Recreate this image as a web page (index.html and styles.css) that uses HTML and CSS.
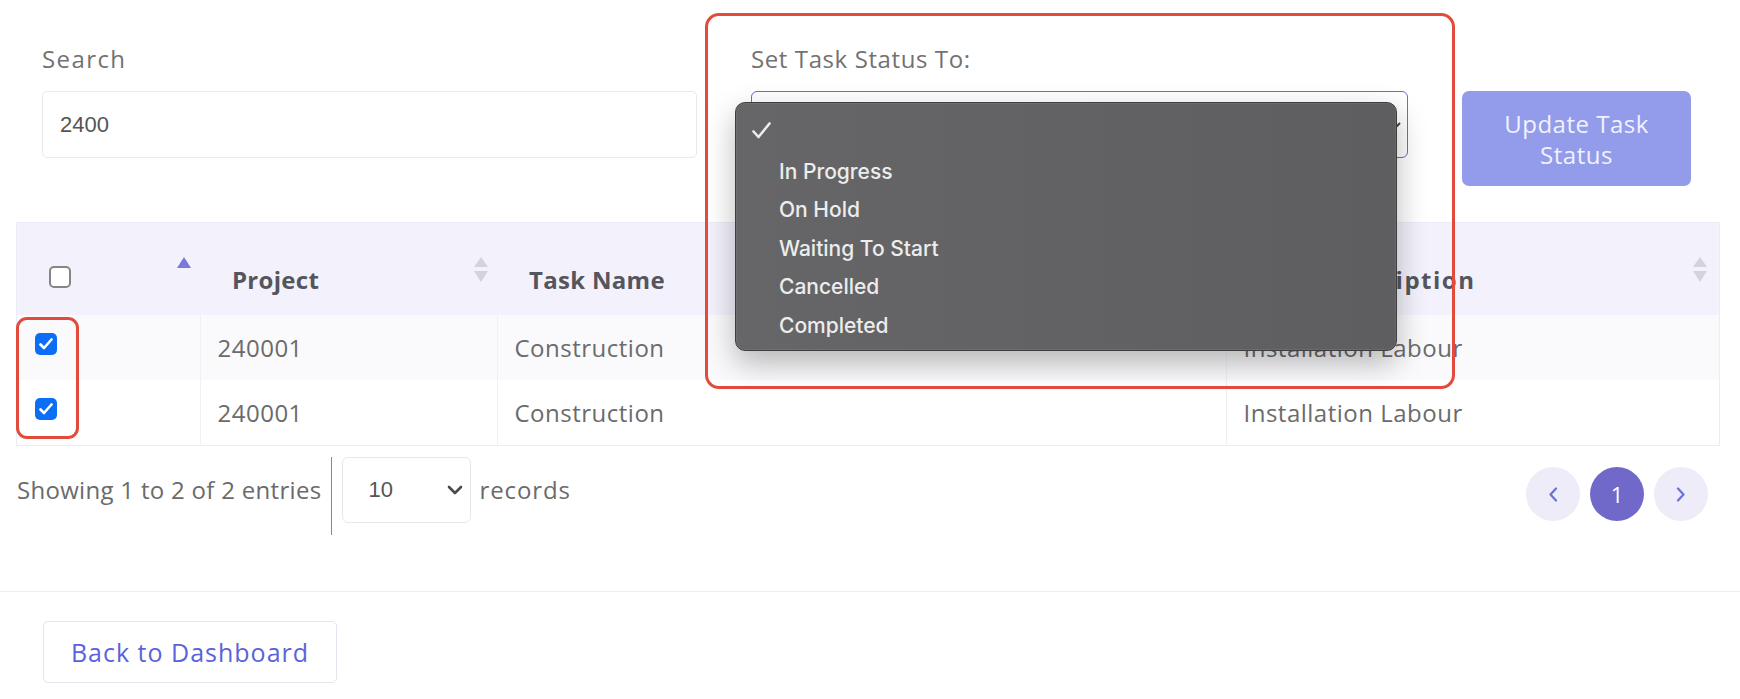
FILE: index.html
```html
<!DOCTYPE html>
<html lang="en">
<head>
<meta charset="utf-8">
<title>Update Task Status</title>
<link rel="stylesheet" href="styles.css">
</head>
<body>
<div class="page">
  <div class="filters">
    <div class="field search-field">
      <label class="field-label">Search</label>
      <div class="text-input">2400</div>
    </div>
    <div class="field status-field">
      <label class="field-label">Set Task Status To:</label>
      <div class="select-input">
        <svg class="select-caret" width="10" height="8" viewBox="0 0 10 8"><path d="M1 2 L5 6 L9 2" fill="none" stroke="#444" stroke-width="2"/></svg>
      </div>
    </div>
    <button class="update-btn">Update Task Status</button>
  </div>

  <div class="table-wrap">
    <table>
      <colgroup>
        <col class="c1"><col class="c2"><col class="c3"><col class="c4">
      </colgroup>
      <thead>
        <tr>
          <th><span class="cb cb-off"></span>
            <svg class="sort" width="14" height="25" viewBox="0 0 14 25"><path d="M7 0 L14 11 L0 11 Z" fill="#7b79dc"/></svg>
          </th>
          <th>Project
            <svg class="sort" width="14" height="25" viewBox="0 0 14 25"><path d="M7 0 L14 10 L0 10 Z" fill="#d3d3da"/><path d="M0 14 L14 14 L7 25 Z" fill="#d3d3da"/></svg>
          </th>
          <th>Task Name
            <svg class="sort" width="14" height="25" viewBox="0 0 14 25"><path d="M7 0 L14 10 L0 10 Z" fill="#d3d3da"/><path d="M0 14 L14 14 L7 25 Z" fill="#d3d3da"/></svg>
          </th>
          <th class="th-desc">Task Description
            <svg class="sort sort-last" width="14" height="25" viewBox="0 0 14 25"><path d="M7 0 L14 10 L0 10 Z" fill="#d3d3da"/><path d="M0 14 L14 14 L7 25 Z" fill="#d3d3da"/></svg>
          </th>
        </tr>
      </thead>
      <tbody>
        <tr>
          <td><span class="cb cb-on"><svg width="14" height="12" viewBox="0 0 14 12"><path d="M1.5 6.5 L5 10 L12.5 1.5" fill="none" stroke="#fff" stroke-width="2.6" stroke-linecap="round" stroke-linejoin="round"/></svg></span></td>
          <td>240001</td>
          <td>Construction</td>
          <td>Installation Labour</td>
        </tr>
        <tr>
          <td><span class="cb cb-on"><svg width="14" height="12" viewBox="0 0 14 12"><path d="M1.5 6.5 L5 10 L12.5 1.5" fill="none" stroke="#fff" stroke-width="2.6" stroke-linecap="round" stroke-linejoin="round"/></svg></span></td>
          <td>240001</td>
          <td>Construction</td>
          <td>Installation Labour</td>
        </tr>
      </tbody>
    </table>
  </div>

  <div class="table-footer">
    <div class="length">
      <div class="info">Showing 1 to 2 of 2 entries</div>
      <div class="len-select"><span>10</span>
        <svg width="16" height="10" viewBox="0 0 16 10"><path d="M2 2 L8 8 L14 2" fill="none" stroke="#4a4a4a" stroke-width="2.6" stroke-linecap="round" stroke-linejoin="round"/></svg>
      </div>
      <div class="records">records</div>
    </div>
    <div class="pager">
      <div class="page-btn"><svg width="10" height="15" viewBox="0 0 10 15"><path d="M8 1.5 L2.5 7.5 L8 13.5" fill="none" stroke="#6a70da" stroke-width="2.2" stroke-linecap="round" stroke-linejoin="round"/></svg></div>
      <div class="page-btn active">1</div>
      <div class="page-btn"><svg width="10" height="15" viewBox="0 0 10 15"><path d="M2 1.5 L7.5 7.5 L2 13.5" fill="none" stroke="#6a70da" stroke-width="2.2" stroke-linecap="round" stroke-linejoin="round"/></svg></div>
    </div>
  </div>

  <div class="rule"></div>

  <div class="actions">
    <button class="back-btn">Back to Dashboard</button>
  </div>
</div>

<div class="menu">
  <div class="menu-item"><svg class="menu-check" width="19" height="17" viewBox="0 0 19 17"><path d="M1.5 9.5 L6.5 15 L17.5 1.5" fill="none" stroke="#ececec" stroke-width="2.6" stroke-linecap="round" stroke-linejoin="round"/></svg></div>
  <div class="menu-item">In Progress</div>
  <div class="menu-item">On Hold</div>
  <div class="menu-item">Waiting To Start</div>
  <div class="menu-item">Cancelled</div>
  <div class="menu-item">Completed</div>
</div>

<div class="annot annot-status"></div>
<div class="annot annot-checks"></div>
</body>
</html>
```

FILE: styles.css
```css
* { box-sizing: border-box; }
html, body { margin: 0; padding: 0; background: #ffffff; }
body {
  font-family: "Open Sans", "Liberation Sans", sans-serif;
  color: #6b6b6b;
  width: 1740px;
  height: 699px;
  position: relative;
  overflow: hidden;
}

/* top filters */
.filters {
  display: flex;
  align-items: flex-start;
  gap: 54px;
  padding: 43px 0 0 42px;
}
.field-label {
  display: block;
  font-size: 24px;
  line-height: 32px;
  height: 32px;
  margin-bottom: 16px;
  color: #727272;
  letter-spacing: 0.6px;
}
.search-field .field-label { letter-spacing: 1.4px; }
.search-field { width: 655px; }
.status-field { width: 657px; }
.text-input {
  height: 67px;
  border: 1px solid #e8e8f0;
  border-radius: 5px;
  padding: 0 17px;
  display: flex;
  align-items: center;
  font-family: "Liberation Sans", Arial, sans-serif;
  font-size: 22px;
  color: #555555;
}
.select-input {
  height: 67px;
  border: 1.5px solid #7068d8;
  border-radius: 6px;
  display: flex;
  align-items: center;
  justify-content: flex-end;
  padding-right: 6px;
}
.update-btn {
  margin-top: 48px;
  width: 229px;
  height: 95px;
  background: #939cea;
  border: 0;
  border-radius: 7px;
  color: #f1f2ff;
  font-family: inherit;
  font-size: 24px;
  line-height: 31px;
  letter-spacing: 0.5px;
  padding: 0 22px;
}

/* table */
.table-wrap {
  margin: 36px 20px 0 16px;
  border: 1px solid #ececf6;
}
table {
  width: 100%;
  border-collapse: collapse;
  table-layout: fixed;
}
col.c1 { width: 183px; }
col.c2 { width: 297px; }
col.c3 { width: 729px; }
col.c4 { width: auto; }
thead tr { background: #f3f2fc; }
th {
  position: relative;
  height: 92px;
  text-align: left;
  font-weight: 700;
  font-size: 24px;
  color: #55555e;
  padding: 20px 30px 0 32px;
  vertical-align: middle;
  letter-spacing: 0.3px;
}
th.th-desc { letter-spacing: 1.5px; padding-left: 26px; }
.sort {
  position: absolute;
  right: 9px;
  top: 34px;
}
.sort-last { right: 12px; }
tbody td {
  height: 65px;
  padding: 0 17px;
  font-size: 24px;
  color: #6b6b6b;
  border-left: 1px solid #efeff5;
  vertical-align: middle;
  letter-spacing: 0.5px;
  white-space: nowrap;
}
tbody td:first-child { border-left: 0; padding-left: 18px; }
tbody tr:nth-child(odd) { background: #fafafc; }

.cb {
  display: block;
  width: 22px;
  height: 22px;
  border-radius: 5px;
}
.cb-off {
  border: 2px solid #858585;
  background: #ffffff;
  margin-top: -4px;
}
.cb-on {
  background: #0b6ef5;
  display: flex;
  align-items: center;
  justify-content: center;
  margin-top: -8px;
}

/* footer of table */
.table-footer {
  display: flex;
  justify-content: space-between;
  align-items: flex-start;
  margin-top: 11px;
  padding: 0 32px 0 17px;
}
.length {
  display: flex;
  align-items: flex-start;
  font-size: 24px;
  color: #6b6b6b;
  letter-spacing: 0.3px;
}
.info {
  line-height: 66px;
  padding: 0 10px 12px 0;
  border-right: 1px solid #8a8a8a;
}
.len-select {
  margin-left: 10px;
  width: 129px;
  height: 66px;
  border: 1px solid #e7e7ef;
  border-radius: 6px;
  display: flex;
  align-items: center;
  justify-content: space-between;
  padding: 0 7px 0 25px;
  font-family: "Liberation Sans", Arial, sans-serif;
  font-size: 22px;
  color: #555555;
  letter-spacing: 0;
}
.records {
  margin-left: 8px;
  line-height: 66px;
  letter-spacing: 0.9px;
}
.pager {
  display: flex;
  gap: 10px;
  margin-top: 10px;
}
.page-btn {
  width: 54px;
  height: 54px;
  border-radius: 50%;
  background: #edecf8;
  display: flex;
  align-items: center;
  justify-content: center;
}
.page-btn.active {
  background: #7169c9;
  color: #ffffff;
  font-size: 22px;
}

.rule {
  height: 1px;
  background: #ececf5;
  margin-top: 56px;
}
.actions { padding: 29px 0 0 43px; }
.back-btn {
  width: 294px;
  height: 62px;
  border: 1px solid #e4e4ee;
  border-radius: 5px;
  background: #ffffff;
  color: #5a63dc;
  font-family: inherit;
  font-size: 25px;
  letter-spacing: 1px;
}

/* native-looking open dropdown */
.menu {
  position: absolute;
  left: 735px;
  top: 102px;
  width: 662px;
  height: 249px;
  background: linear-gradient(90deg, #666668, #5e5e60);
  border: 1px solid #3e3e40;
  border-radius: 10px;
  box-shadow: inset 0 0 0 1px rgba(255,255,255,0.07), 0 12px 30px rgba(0,0,0,0.28);
  padding-top: 11px;
  font-family: Inter, "Noto Sans", sans-serif;
  font-size: 21px;
  font-weight: 500;
  color: #ededed;
}
.menu-item {
  position: relative;
  height: 38.4px;
  display: flex;
  align-items: center;
  padding-left: 43px;
}
.menu-check {
  position: absolute;
  left: 16px;
  top: 8px;
}

/* annotation outlines */
.annot {
  position: absolute;
  border: 3px solid #e24b3b;
  border-radius: 14px;
  pointer-events: none;
}
.annot-status { left: 705px; top: 13px; width: 750px; height: 376px; }
.annot-checks { left: 16px; top: 317px; width: 63px; height: 122px; border-radius: 11px; }
```
